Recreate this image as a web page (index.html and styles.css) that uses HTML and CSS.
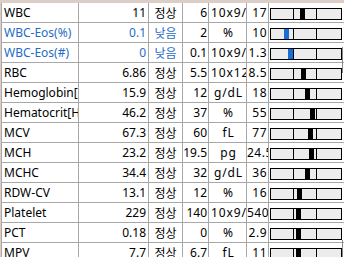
FILE: index.html
```html
<!DOCTYPE html>
<html lang="ko">
<head>
<meta charset="utf-8">
<link rel="stylesheet" href="styles.css">
</head>
<body>
<div class="grid">
  <div class="c name">WBC</div><div class="c num">11</div><div class="c st">정상</div><div class="c lo">6</div><div class="c unit">10x9/L</div><div class="c hi">17</div>
  <div class="c bc"><div class="bar"><span></span><span></span><span></span><i class="mk" style="left:29px"></i></div></div>

  <div class="c name low">WBC-Eos(%)</div><div class="c num low">0.1</div><div class="c st low">낮음</div><div class="c lo">2</div><div class="c unit">%</div><div class="c hi">10</div>
  <div class="c bc"><div class="bar"><span></span><span></span><span></span><i class="mk blue" style="left:13px"></i></div></div>

  <div class="c name low">WBC-Eos(#)</div><div class="c num low">0</div><div class="c st low">낮음</div><div class="c lo">0.1</div><div class="c unit">10x9/L</div><div class="c hi">1.3</div>
  <div class="c bc"><div class="bar"><span></span><span></span><span></span><i class="mk blue" style="left:17px"></i></div></div>

  <div class="c name">RBC</div><div class="c num">6.86</div><div class="c st">정상</div><div class="c lo">5.5</div><div class="c unit">10x12/L</div><div class="c hi">8.5</div>
  <div class="c bc"><div class="bar"><span></span><span></span><span></span><i class="mk" style="left:30px"></i></div></div>

  <div class="c name">Hemoglobin[g/dL]</div><div class="c num">15.9</div><div class="c st">정상</div><div class="c lo">12</div><div class="c unit">g/dL</div><div class="c hi">18</div>
  <div class="c bc"><div class="bar"><span></span><span></span><span></span><i class="mk" style="left:34px"></i></div></div>

  <div class="c name">Hematocrit[HCT]</div><div class="c num">46.2</div><div class="c st">정상</div><div class="c lo">37</div><div class="c unit">%</div><div class="c hi">55</div>
  <div class="c bc"><div class="bar"><span></span><span></span><span></span><i class="mk" style="left:39px"></i></div></div>

  <div class="c name">MCV</div><div class="c num">67.3</div><div class="c st">정상</div><div class="c lo">60</div><div class="c unit">fL</div><div class="c hi">77</div>
  <div class="c bc"><div class="bar"><span></span><span></span><span></span><i class="mk" style="left:37px"></i></div></div>

  <div class="c name">MCH</div><div class="c num">23.2</div><div class="c st">정상</div><div class="c lo">19.5</div><div class="c unit">pg</div><div class="c hi">24.5</div>
  <div class="c bc"><div class="bar"><span></span><span></span><span></span><i class="mk" style="left:38px"></i></div></div>

  <div class="c name">MCHC</div><div class="c num">34.4</div><div class="c st">정상</div><div class="c lo">32</div><div class="c unit">g/dL</div><div class="c hi">36</div>
  <div class="c bc"><div class="bar"><span></span><span></span><span></span><i class="mk" style="left:34px"></i></div></div>

  <div class="c name">RDW-CV</div><div class="c num">13.1</div><div class="c st">정상</div><div class="c lo">12</div><div class="c unit">%</div><div class="c hi">16</div>
  <div class="c bc"><div class="bar"><span></span><span></span><span></span><i class="mk" style="left:26px"></i></div></div>

  <div class="c name">Platelet</div><div class="c num">229</div><div class="c st">정상</div><div class="c lo">140</div><div class="c unit">10x9/L</div><div class="c hi">540</div>
  <div class="c bc"><div class="bar"><span></span><span></span><span></span><i class="mk" style="left:25px"></i></div></div>

  <div class="c name">PCT</div><div class="c num">0.18</div><div class="c st">정상</div><div class="c lo">0</div><div class="c unit">%</div><div class="c hi">2.9</div>
  <div class="c bc"><div class="bar"><span></span><span></span><span></span><i class="mk" style="left:25px"></i></div></div>

  <div class="c name">MPV</div><div class="c num">7.7</div><div class="c st">정상</div><div class="c lo">6.7</div><div class="c unit">fL</div><div class="c hi">11</div>
  <div class="c bc"><div class="bar"><span></span><span></span><span></span><i class="mk" style="left:25px"></i></div></div>
</div>
<div class="edge e1"></div>
<div class="edge e2"></div>
</body>
</html>
```
FILE: styles.css
```css
html, body {
  margin: 0;
  padding: 0;
  background: #dccdc6;
  overflow: hidden;
  height: 257px;
}
body {
  position: relative;
  font-family: "Noto Sans", "Noto Sans CJK KR", sans-serif;
  font-size: 12px;
  color: #000;
}
.grid {
  display: grid;
  grid-template-columns: 76px 69px 33px 25px 37px 21px 80px;
  grid-auto-rows: 19px;
  gap: 1px;
  background: #a8a8a8;
  margin: 3px 0 0 1px;
  padding-left: 1px;
  width: max-content;
}
.c {
  background: #fff;
  line-height: 19px;
  white-space: nowrap;
  overflow: hidden;
}
.name { padding-left: 2px; }
.num { text-align: right; padding-right: 2px; }
.st { text-align: center; font-family: "Noto Sans CJK KR", sans-serif; }
.lo { text-align: right; padding-right: 1px; }
.unit { text-align: center; padding-left: 2px; letter-spacing: 0.9px; }
.hi { text-align: right; padding-right: 1px; letter-spacing: 0.5px; }
.low { color: #1f6cc6; }
.bc { padding: 5px 0 0 1px; }
.bar {
  position: relative;
  display: flex;
  width: 70px;
  height: 10px;
  border: 1px solid #000;
  background: #ececec;
}
.bar span { width: 22px; border-right: 1px solid #000; }
.bar span:last-of-type { border-right: 0; width: 24px; }
.mk {
  position: absolute;
  top: 0;
  bottom: 0;
  width: 5px;
  background: #000;
}
.mk.blue { background: #1a6fd6; }
.edge {
  position: absolute;
  left: 342px;
  width: 1px;
  background: #8a8a8a;
}
.e1 { top: 47px; height: 26px; }
.e2 { top: 240px; height: 17px; }
```
